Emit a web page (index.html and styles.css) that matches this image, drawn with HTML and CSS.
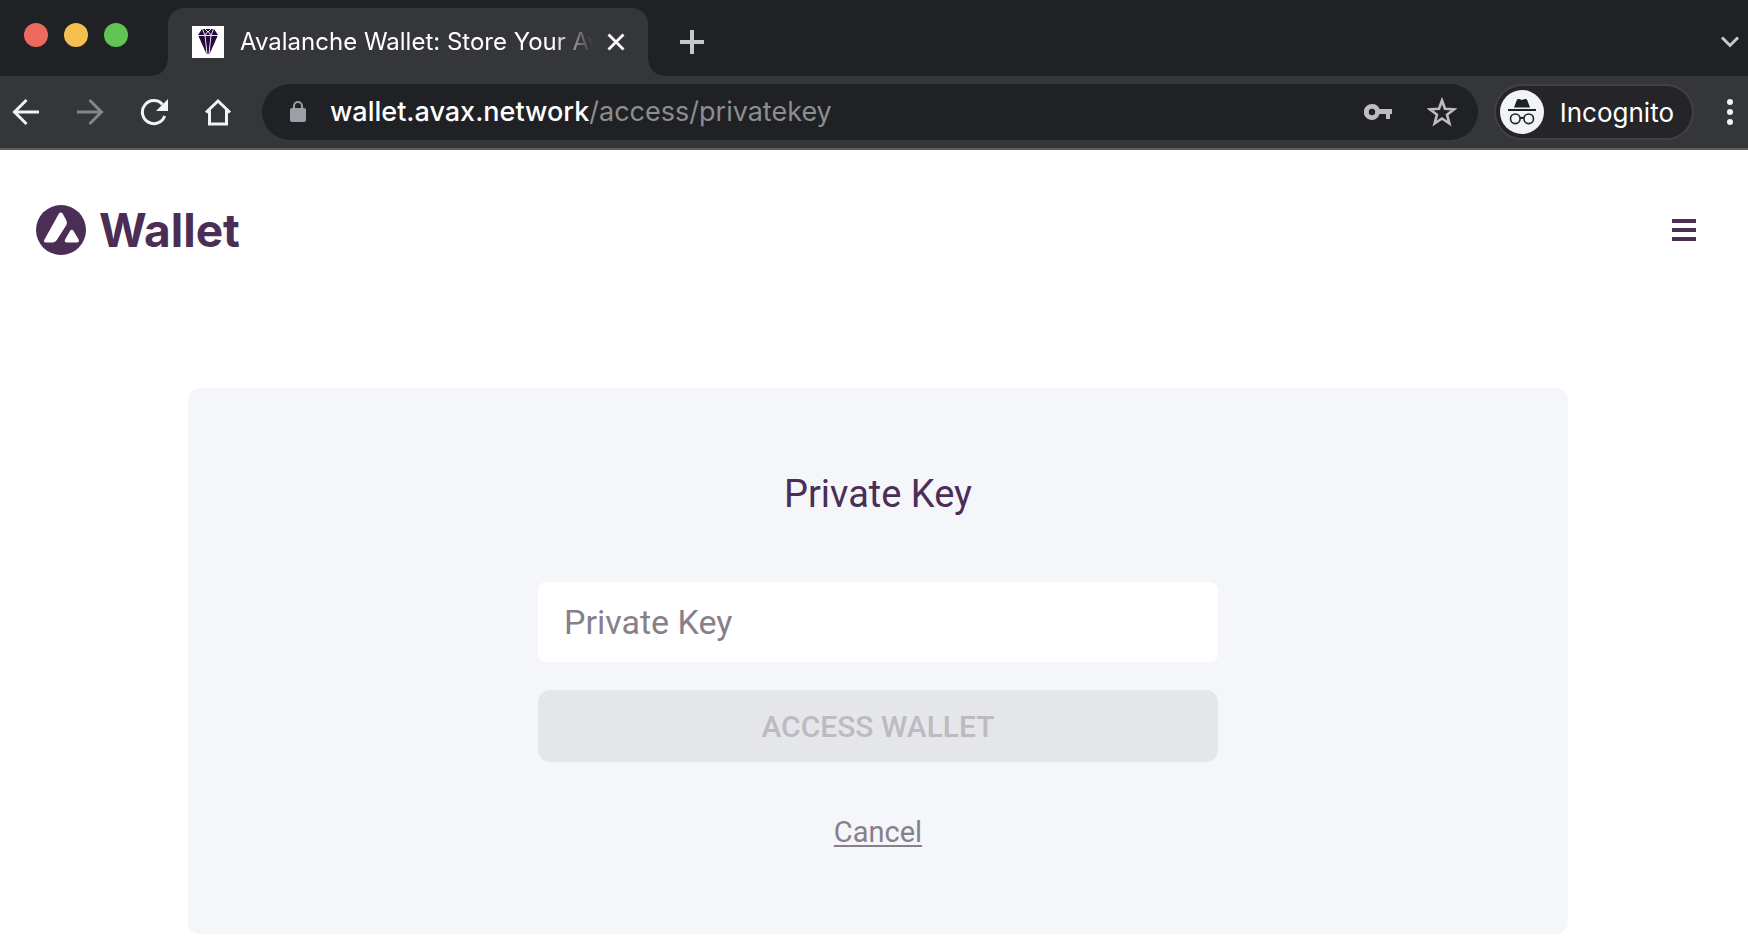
FILE: index.html
```html
<!DOCTYPE html>
<html lang="en">
<head>
<meta charset="utf-8">
<meta name="viewport" content="width=device-width, initial-scale=1">
<title>Avalanche Wallet: Store Your Avalanche Assets</title>
<link rel="stylesheet" href="styles.css">
</head>
<body>
<header class="browser">
  <div class="tab-strip">
    <div class="window-controls">
      <span class="light light-close"></span>
      <span class="light light-minimize"></span>
      <span class="light light-zoom"></span>
    </div>
    <div class="tab">
      <svg class="favicon" viewBox="0 0 32 32" width="32" height="32" aria-hidden="true">
        <rect width="32" height="32" fill="#fff"/>
        <path d="M10 3h12l4 6-8.500 19h-3L6 9z" fill="#27083d"/>
        <path d="M6 9.500h20M10.500 3l2.500 6.500L16 5l3 4.500L21.500 3M13 9.500L15 28M19 9.500L17 28M13 3l3 3 3-3" fill="none" stroke="#e9e4ee" stroke-width="1"/>
      </svg>
      <span class="tab-title">Avalanche Wallet: Store Your Av</span>
      <button class="icon-button tab-close" type="button" aria-label="Close tab">
        <svg viewBox="0 0 18 18" width="18" height="18"><path d="M1.500 1.500l15 15M16.500 1.500l-15 15" fill="none" stroke="#fff" stroke-width="2.800"/></svg>
      </button>
    </div>
    <button class="icon-button new-tab" type="button" aria-label="New tab">
      <svg viewBox="0 0 24 24" width="24" height="24"><path d="M12 0v24M0 12h24" fill="none" stroke="#c6c8cb" stroke-width="4"/></svg>
    </button>
    <button class="icon-button tab-search" type="button" aria-label="Search tabs">
      <svg viewBox="0 0 20 12" width="20" height="12"><path d="M2 1.500l8 8 8-8" fill="none" stroke="#c6c8cb" stroke-width="3"/></svg>
    </button>
  </div>
  <div class="toolbar">
    <nav class="nav-buttons" aria-label="Browser">
      <button class="icon-button" type="button" aria-label="Back">
        <svg viewBox="0 0 28 28" width="28" height="28"><path d="M27 14H3M14.500 2L2.500 14l12 12" fill="none" stroke="#f1f3f4" stroke-width="3"/></svg>
      </button>
      <button class="icon-button" type="button" aria-label="Forward" disabled>
        <svg viewBox="0 0 28 28" width="28" height="28"><path d="M1 14h24M13.500 2l12 12-12 12" fill="none" stroke="#85868a" stroke-width="3"/></svg>
      </button>
      <button class="icon-button" type="button" aria-label="Reload">
        <svg viewBox="0 0 28 28" width="28" height="28"><path d="M24.700 18A11.500 11.500 0 1 1 22.500 6.500" fill="none" stroke="#f1f3f4" stroke-width="3"/><path d="M28 1v12H16z" fill="#f1f3f4"/></svg>
      </button>
      <button class="icon-button" type="button" aria-label="Home">
        <svg viewBox="0 0 28 28" width="28" height="28"><path d="M2 14.500L14 3l12 11.500M5.500 12v14h17V12" fill="none" stroke="#f1f3f4" stroke-width="3"/></svg>
      </button>
    </nav>
    <div class="omnibox">
      <svg class="lock" viewBox="0 0 16 22" width="16" height="22" aria-hidden="true"><rect y="7" width="16" height="14" rx="2" fill="#9aa0a6"/><path d="M4 8V5a4 4 0 0 1 8 0v3" fill="none" stroke="#9aa0a6" stroke-width="2"/></svg>
      <span class="url">wallet.avax.network<span class="url-path">/access/privatekey</span></span>
      <button class="icon-button" type="button" aria-label="Passwords">
        <svg viewBox="0 0 28 18" width="28" height="18"><path fill-rule="evenodd" d="M8 1a8 8 0 0 1 7.500 5H28v5h-2v5h-4v-5h-6.500A8 8 0 1 1 8 1zm0 4.800a3.200 3.200 0 1 0 0 6.400 3.200 3.200 0 0 0 0-6.400z" fill="#bdbdbd"/></svg>
      </button>
      <button class="icon-button" type="button" aria-label="Bookmark">
        <svg viewBox="0 0 30 30" width="30" height="30"><path d="M15 3.500l3 8.200 9 .6-7 5.400 2.400 8.800-7.400-5-7.400 5L10 17.700l-7-5.400 9-.6z" fill="none" stroke="#bdbdbd" stroke-width="2.600"/></svg>
      </button>
    </div>
    <button class="profile" type="button">
      <svg viewBox="0 0 44 44" width="44" height="44" aria-hidden="true"><circle cx="22" cy="22" r="22" fill="#f1f3f4"/><path d="M14 17.500l2.600-7c.4-1.200 1.400-1.800 2.600-1.400l2.800.8 2.800-.8c1.200-.4 2.200.2 2.600 1.400l2.600 7z" fill="#202124"/><path d="M8 20h28M20 28.500q2-1.500 4 0" fill="none" stroke="#202124" stroke-width="2"/><circle cx="15.300" cy="28.800" r="4.800" fill="none" stroke="#202124" stroke-width="1.600"/><circle cx="28.700" cy="28.800" r="4.800" fill="none" stroke="#202124" stroke-width="1.600"/></svg>
      <span>Incognito</span>
    </button>
    <button class="icon-button browser-menu" type="button" aria-label="Browser menu">
      <svg viewBox="0 0 6 26" width="6" height="26"><g fill="#f1f3f4"><circle cx="3" cy="3" r="3"/><circle cx="3" cy="13" r="3"/><circle cx="3" cy="23" r="3"/></g></svg>
    </button>
  </div>
</header>
<div class="page">
  <header class="site-header">
    <a class="brand" href="#">
      <svg viewBox="0 0 50 50" width="50" height="50" aria-hidden="true"><circle cx="25" cy="25" r="25" fill="#4b2d55"/><path d="M22.800 8.800q2-2.600 4 0l3.600 6.800q1 2.400 0 4.500L20.800 35q-1.400 2.400-4 2.400H10q-3-.2-1.500-3zM34 26q1.800-2.400 3.600 0l5 8.600q1.200 2.600-1.400 2.800H30.500q-2.700-.2-1.400-2.800z" fill="#fff"/></svg>
      <span>Wallet</span>
    </a>
    <button class="icon-button" type="button" aria-label="Open menu">
      <svg viewBox="0 0 24 22" width="24" height="22"><path d="M0 2h24M0 11h24M0 20h24" fill="none" stroke="#4b2d55" stroke-width="4"/></svg>
    </button>
  </header>
  <main class="card">
    <h1 class="title">Private Key</h1>
    <form class="access-form">
      <input class="key-input" type="password" placeholder="Private Key" aria-label="Private Key">
      <button class="submit" type="submit" disabled>ACCESS WALLET</button>
    </form>
    <a class="cancel" href="#">Cancel</a>
  </main>
</div>
</body>
</html>
```
FILE: styles.css
```css
* {
  box-sizing: border-box;
}

body {
  margin: 0;
  background: #fff;
  font-family: Roboto, "Liberation Sans", sans-serif;
  color: #4b2d55;
}

button,
input {
  font: inherit;
  border: 0;
  margin: 0;
}

svg {
  display: block;
  flex: none;
}

.icon-button {
  flex: none;
  padding: 0;
  background: none;
}

.browser {
  background: #35363a;
  border-bottom: 2px solid #5d5e62;
  color: #fff;
  font-family: Inter, Roboto, sans-serif;
}

.tab-strip {
  display: flex;
  align-items: center;
  height: 76px;
  padding: 8px 8px 0 24px;
  background: #202124;
}

.window-controls {
  display: flex;
  gap: 16px;
  margin: 0 40px 14px 0;
}

.light {
  width: 24px;
  height: 24px;
  border-radius: 50%;
}

.light-close {
  background: #ed6a5e;
}

.light-minimize {
  background: #f5bf4f;
}

.light-zoom {
  background: #61c554;
}

.tab {
  position: relative;
  display: flex;
  align-items: center;
  width: 480px;
  height: 68px;
  padding: 0 23px 0 24px;
  border-radius: 16px 16px 0 0;
  background: #35363a;
}

.tab::before,
.tab::after {
  content: "";
  position: absolute;
  bottom: 0;
  width: 16px;
  height: 16px;
}

.tab::before {
  right: 100%;
  background: radial-gradient(circle at 0 0, #202124 15px, #35363a 16px);
}

.tab::after {
  left: 100%;
  background: radial-gradient(circle at 100% 0, #202124 15px, #35363a 16px);
}

.tab-title {
  flex: 1;
  margin: 0 14px 0 16px;
  overflow: hidden;
  white-space: nowrap;
  font-size: 24px;
  line-height: 32px;
  mask-image: linear-gradient(to right, #000 calc(100% - 40px), transparent 100%);
}

.new-tab {
  margin-left: 32px;
}

.tab-search {
  margin-left: auto;
}

.toolbar {
  display: flex;
  align-items: center;
  height: 72px;
  padding: 0 15px 0 12px;
}

.nav-buttons {
  display: flex;
  gap: 36px;
  margin-right: 30px;
}

.omnibox {
  display: flex;
  flex: 1;
  align-items: center;
  height: 56px;
  padding: 0 21px 0 28px;
  border-radius: 28px;
  background: #202124;
}

.url {
  flex: 1;
  margin-left: 24px;
  font-size: 27px;
  font-weight: 500;
  line-height: 36px;
}

.url-path {
  color: #8d8e91;
  font-weight: 400;
}

.omnibox .icon-button + .icon-button {
  margin-left: 35px;
}

.profile {
  display: flex;
  align-items: center;
  gap: 16px;
  height: 56px;
  margin: 0 33px 0 16px;
  padding: 0 18px 0 4px;
  border: 2px solid #414246;
  border-radius: 28px;
  background: #252429;
  color: #fff;
  font-size: 26px;
}

.site-header {
  display: flex;
  align-items: center;
  justify-content: space-between;
  padding: 50px 52px 50px 36px;
}

.brand {
  display: flex;
  align-items: center;
  gap: 13px;
  color: inherit;
  font-family: Inter, Roboto, sans-serif;
  font-size: 46px;
  font-weight: 700;
  line-height: 60px;
  text-decoration: none;
}

.card {
  display: flex;
  flex-direction: column;
  align-items: center;
  margin: 78px 180px 2px 188px;
  padding: 81px 40px 84px;
  border-radius: 12px;
  background: #f4f6fa;
}

.title {
  margin: 0 0 63px;
  font-size: 38px;
  font-weight: 400;
  line-height: 50px;
}

.access-form {
  display: flex;
  flex-direction: column;
  gap: 28px;
  width: 100%;
  max-width: 680px;
}

.key-input {
  height: 80px;
  padding: 0 26px;
  border-radius: 8px;
  background: #fff;
  color: #4b2d55;
  font-size: 34px;
}

.key-input::placeholder {
  color: #877f8a;
  opacity: 1;
}

.submit {
  height: 72px;
  border-radius: 12px;
  background: #e5e6ea;
  color: #bdbac1;
  font-size: 30px;
  font-weight: 500;
}

.cancel {
  margin-top: 52px;
  color: #877f8a;
  font-size: 29px;
  line-height: 36px;
  text-underline-offset: 3px;
  text-decoration-thickness: 2px;
}
```
